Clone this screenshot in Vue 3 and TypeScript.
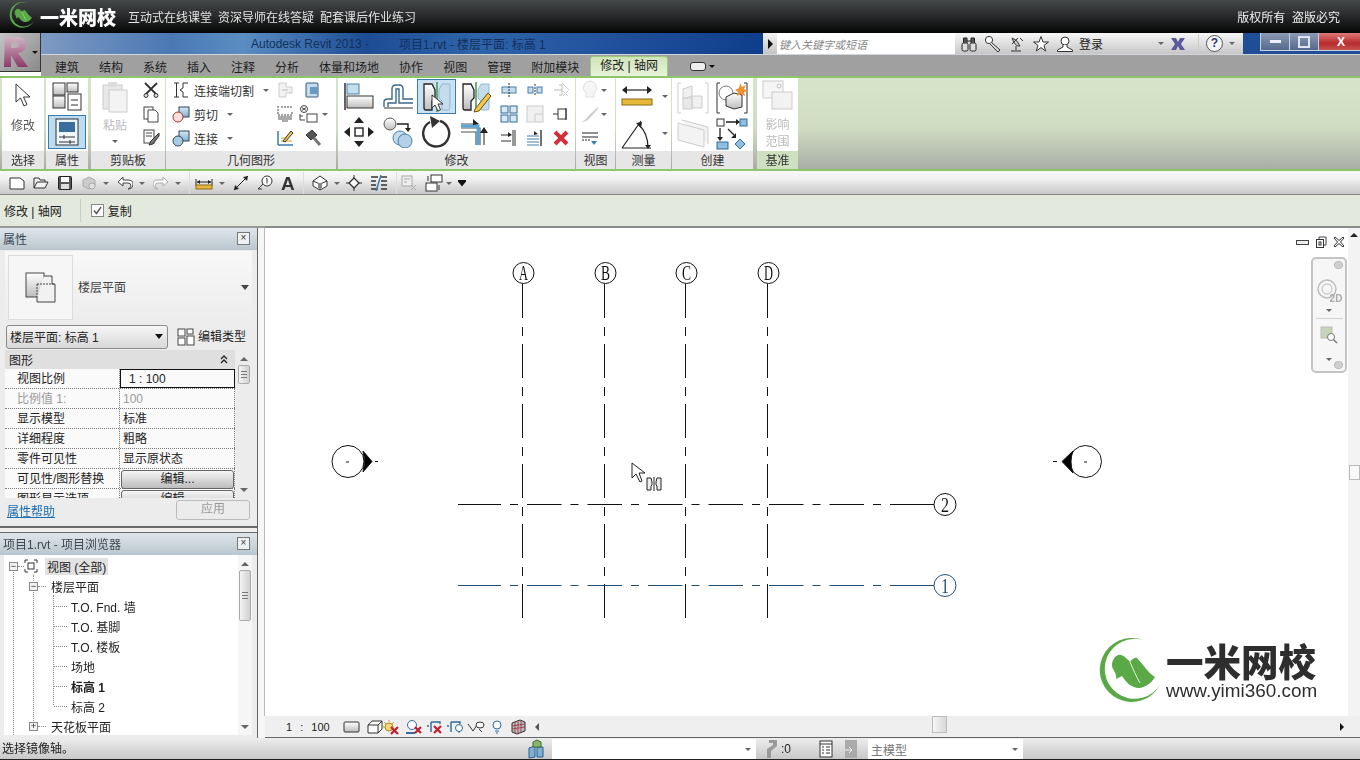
<template>
  <div class="app">
    <svg class="sprite" aria-hidden="true">
      <defs>
        <linearGradient id="gg" x1="0" y1="0" x2="0" y2="1"><stop offset="0" stop-color="#fff" /><stop offset="1" stop-color="#bdbdbd" /></linearGradient>
        <linearGradient id="bg" x1="0" y1="0" x2="0" y2="1"><stop offset="0" stop-color="#d8eaf6" /><stop offset="1" stop-color="#7fb0d0" /></linearGradient>
        <linearGradient id="rv" x1="0" y1="0" x2="0" y2="1"><stop offset="0" stop-color="#d2b4c4" /><stop offset="1" stop-color="#8c3a68" /></linearGradient>
        <symbol id="yimi" viewBox="0 0 72 72">
          <path d="M45 2A32 32 0 1 0 62 47A30 30 0 1 1 45 2Z" fill="#5aa846" />
          <path d="M14 26C15 20 19 16 23 17C27 18 30 22 32 24C34 21 37 19 39 20C45 26 50 35 57 39C52 47 44 52 36 49C30 47 27 42 24 38C22 39 20 40 18 41C19 38 17 34 15 31C14 29 14 28 14 26Z" fill="#5aa846" />
          <path d="M32 24C35 31 38 38 42 45" stroke="#e4f2dc" stroke-width="1" fill="none" />
        </symbol>
        <symbol id="mirror" viewBox="0 0 30 32">
          <path d="M2 3H10L13 9V17L10 20V29H4Q2 29 2 27Z" fill="url(#gg)" stroke="#222" stroke-width="1.3" />
          <path d="M15 1V31" stroke="#4f9a5c" stroke-width="1.6" />
          <path d="M28 3H20L17 9V17L20 20V29H26Q28 29 28 27Z" fill="#c5dcec" stroke="#8fb7d0" />
        </symbol>
      </defs>
    </svg>

    <!-- video site banner -->
    <header class="banner">
      <svg class="banner-logo" viewBox="0 0 72 72"><use href="#yimi" /></svg>
      <span class="banner-name">一米网校</span>
      <span class="banner-slogan">互动式在线课堂</span>
      <span class="banner-slogan">资深导师在线答疑</span>
      <span class="banner-slogan">配套课后作业练习</span>
      <span class="banner-right">版权所有&nbsp;&nbsp;盗版必究</span>
    </header>

    <div class="app-head">
      <div class="app-btn">
        <svg width="30" height="36" viewBox="0 0 30 36">
          <path d="M4 3H18Q26 4 25 12Q24 18 17 19L27 33H17L10 21V33H3Z" fill="url(#rv)" />
          <path d="M10 8H16Q19 9 18 12Q17 14 10 14Z" fill="#b9b0b4" />
        </svg>
        <i class="tri small black"></i>
      </div>
      <div class="app-main">
        <div class="title-row">
          <div class="title-blue">
            <span class="title-text">Autodesk Revit 2013 -</span>
            <span class="title-text">项目1.rvt - 楼层平面: 标高 1</span>
          </div>
          <div class="search-arrow"><i class="tri-right"></i></div>
          <div class="search-box">键入关键字或短语</div>
          <div class="title-tools">
            <svg width="18" height="18" viewBox="0 0 18 18"><rect x="2" y="8" width="6" height="8" rx="1.5" fill="#ddd" stroke="#222" /><rect x="10" y="8" width="6" height="8" rx="1.5" fill="#ddd" stroke="#222" /><path d="M3.5 8V3H7V8M11 8V3H14.5V8M7 6H11" fill="#555" stroke="#222" /></svg>
            <svg width="18" height="18" viewBox="0 0 18 18"><circle cx="5" cy="5" r="3.6" fill="#fff" stroke="#333" /><path d="M7.5 7.5L16 15L14 17L6 9" fill="#ddd" stroke="#333" /></svg>
            <svg width="18" height="18" viewBox="0 0 18 18"><path d="M4 3Q9 4 12 11Q7 12 4 3ZM10 3L4 9M8 11V15M3 16H13M12 3L15 6" fill="#ccc" stroke="#333" /></svg>
            <svg width="18" height="18" viewBox="0 0 18 18"><path d="M9 1.5L11 7H16.5L12 10.4L13.7 16L9 12.6L4.3 16L6 10.4L1.5 7H7Z" fill="#fff" stroke="#333" /></svg>
            <svg width="18" height="18" viewBox="0 0 18 18"><circle cx="9" cy="6" r="4" fill="#fff" stroke="#333" /><path d="M7 10V12L1.5 15V16.5H16.5V15L11 12V10" fill="#fff" stroke="#333" /></svg>
            <span class="login">登录</span>
            <i class="tri small login-tri"></i>
            <svg width="16" height="16" viewBox="0 0 16 16"><path d="M1 2H6L8 6L10 2H15L11 8L15 14H10L8 10L6 14H1L5 8Z" fill="#5a5a9a" /></svg>
            <span class="tools-sep"></span>
            <span class="help">?</span>
            <i class="tri small"></i>
          </div>
          <div class="win-ctrls">
            <span class="win-btn"><i class="win-min"></i></span>
            <span class="win-btn"><i class="win-max"></i></span>
            <span class="win-btn close">X</span>
          </div>
        </div>
        <nav class="tabs">
          <span>建筑</span><span>结构</span><span>系统</span><span>插入</span><span>注释</span><span>分析</span>
          <span>体量和场地</span><span>协作</span><span>视图</span><span>管理</span><span>附加模块</span>
          <span class="tab-active">修改 | 轴网</span>
          <span class="tab-min"><i></i></span>
          <i class="tri small black"></i>
        </nav>
      </div>
    </div>

    <!-- ribbon -->
    <section class="ribbon">
      <div class="panel w-select">
        <div class="pbody col-center">
          <svg class="mt-big" width="18" height="26" viewBox="0 0 18 26"><path d="M2 1V19L6.5 15L10 23L13 21.5L9.5 14H16Z" fill="#fff" stroke="#333" /></svg>
          <span class="big-label">修改</span>
        </div>
        <div class="plabel">选择</div>
      </div>
      <div class="panel w-select">
        <div class="pbody col-center">
          <svg class="mt-top" width="32" height="32" viewBox="0 0 32 32"><rect x="2" y="3" width="12" height="12" fill="url(#gg)" stroke="#333" /><rect x="2" y="16" width="12" height="12" fill="url(#gg)" stroke="#333" /><rect x="16" y="3" width="11" height="9" fill="url(#gg)" stroke="#333" /><rect x="17" y="14" width="13" height="16" fill="#fff" stroke="#333" /><path d="M20 20H27M20 25H27" stroke="#333" /></svg>
          <div class="active-big">
            <svg width="24" height="28" viewBox="0 0 24 28"><rect x="1" y="1" width="22" height="26" fill="#eef5fb" stroke="#333" /><rect x="4" y="4" width="16" height="10" fill="#3a6d9e" /><path d="M4 19H20M4 24H20M9 17V21M15 22V26" stroke="#333" /></svg>
          </div>
        </div>
        <div class="plabel">属性</div>
      </div>
      <div class="panel w-clip gap-l">
        <div class="pbody row">
          <div class="bigcol">
            <svg class="mt-paste" width="26" height="32" viewBox="0 0 26 32"><rect x="1" y="4" width="19" height="24" fill="#e8e8e8" stroke="#ccc" /><rect x="7" y="9" width="18" height="22" fill="#f3f3f3" stroke="#ccc" /><rect x="6" y="1" width="9" height="5" fill="#ddd" /></svg>
            <span class="big-label gray paste-label">粘贴</span>
            <i class="tri small mt-tri"></i>
          </div>
          <div class="smallcol">
            <span class="cell"><svg width="18" height="18" viewBox="0 0 18 18"><path d="M3 2L15 14M15 2L3 14" stroke="#333" stroke-width="1.8" /><circle cx="4" cy="14.5" r="2" fill="#ddd" stroke="#333" /><circle cx="14" cy="14.5" r="2" fill="#ddd" stroke="#333" /></svg></span>
            <span class="cell"><svg width="18" height="18" viewBox="0 0 18 18"><rect x="2" y="2" width="9" height="12" fill="#fff" stroke="#444" /><path d="M6 5H13L16 8V17H6Z" fill="#fff" stroke="#444" /></svg></span>
            <span class="cell"><svg width="18" height="18" viewBox="0 0 18 18"><rect x="2" y="1" width="10" height="13" fill="#fff" stroke="#444" /><path d="M4 4H10M4 7H10" stroke="#444" /><path d="M17 4L9 12L7 16L11 15L17 7Z" fill="#777" stroke="#333" /></svg></span>
          </div>
        </div>
        <div class="plabel">剪贴板</div>
      </div>
      <div class="panel w-geo">
        <div class="pbody row">
          <div class="geo-text">
            <span class="g-row"><svg width="18" height="18" viewBox="0 0 18 18"><path d="M2 2H7M2 16H7M4.5 2V16M16 2H11V7L8 9L11 11V16H16" fill="#fff" stroke="#333" /></svg>连接端切割<i class="tri small ml"></i></span>
            <span class="g-row"><svg width="18" height="18" viewBox="0 0 18 18"><rect x="7" y="2" width="10" height="10" fill="url(#bg)" stroke="#345" /><circle cx="6" cy="12" r="5" fill="#fbdede" stroke="#a33" /></svg>剪切<i class="tri small ml"></i></span>
            <span class="g-row"><svg width="18" height="18" viewBox="0 0 18 18"><rect x="7" y="2" width="10" height="10" fill="url(#bg)" stroke="#345" /><circle cx="6" cy="12" r="5" fill="#a8cde2" stroke="#345" /></svg>连接<i class="tri small ml"></i></span>
          </div>
          <div class="smallcol geo-a">
            <span class="cell"><svg width="18" height="18" viewBox="0 0 18 18"><path d="M3 2H10V6H16V12H10V16H3Z" fill="#f2f2f2" stroke="#ccc" /><path d="M12 9H6" stroke="#bbb" /></svg></span>
            <span class="cell"><svg width="18" height="18" viewBox="0 0 18 18"><path d="M2 1V10H16V7M5 2H16" stroke="#444" fill="none" stroke-dasharray="2 1" /><path d="M2 12H16M2 14H16M6 16H12" stroke="#555" /></svg></span>
            <span class="cell"><svg width="18" height="18" viewBox="0 0 18 18"><path d="M2 16V2M2 16H17" stroke="#3a7cb0" stroke-width="1.5" /><path d="M5 12H16M5 9H12" stroke="#d8a028" /><path d="M7 12L15 2L17 4L9 13Z" fill="#f2c84a" stroke="#333" /></svg></span>
          </div>
          <div class="smallcol geo-b">
            <span class="cell"><svg width="18" height="18" viewBox="0 0 18 18"><rect x="2" y="2" width="12" height="14" rx="1" fill="#c3dcee" stroke="#36587a" /><rect x="6" y="6" width="8" height="7" fill="#6b9ac0" /></svg></span>
            <span class="cell c-wide"><svg width="22" height="18" viewBox="0 0 22 18"><circle cx="6" cy="4" r="3.5" fill="#fff" stroke="#444" /><path d="M4 2.5L8 5.5M8 2.5L4 5.5" stroke="#444" /><rect x="9" y="9" width="10" height="8" fill="#fff" stroke="#444" /><path d="M2 9V15H7M2 11H5" stroke="#444" fill="none" /></svg><i class="tri small"></i></span>
            <span class="cell"><svg width="18" height="18" viewBox="0 0 18 18"><path d="M10 9L16 16" stroke="#777" stroke-width="3" /><path d="M2 6L8 1L13 6L7 11Z" fill="#555" stroke="#333" /></svg></span>
          </div>
        </div>
        <div class="plabel">几何图形</div>
      </div>
      <div class="panel w-mod">
        <div class="pbody row">
          <div class="mod-grid">
            <span class="mcell"><svg width="30" height="30" viewBox="0 0 30 30"><path d="M1 1V28" stroke="#222" stroke-width="1.4" /><rect x="3" y="2" width="12" height="10" fill="#c4deee" stroke="#4a7ea8" /><rect x="3" y="14" width="26" height="12" fill="url(#gg)" stroke="#333" /></svg></span>
            <span class="mcell"><svg width="32" height="30" viewBox="0 0 32 30"><path d="M2 25V20Q2 17 6 17H10V7Q10 3 14 3H17Q21 3 21 7V17H31M6 25V21H14V7H17V21H31" fill="none" stroke="#3b6a88" stroke-width="1.4" /><path d="M2 26H31" stroke="#333" /></svg></span>
            <span class="mcell active"><svg width="30" height="32" viewBox="0 0 30 32"><use href="#mirror" /></svg><svg class="mini-arrow" width="13" height="18" viewBox="0 0 13 18"><path d="M1 1V14L4 11L7 17L9.5 16L7 10H12Z" fill="#fff" stroke="#333" /></svg></span>
            <span class="mcell"><svg width="30" height="32" viewBox="0 0 30 32"><use href="#mirror" /><path d="M14 28L27 12L30 15L18 30L13 31Z" fill="#f2c84a" stroke="#6b5010" /></svg></span>
            <span class="mcell"><svg width="32" height="32" viewBox="0 0 32 32"><path d="M16 1L21 7H11ZM16 31L21 25H11ZM1 16L7 11V21ZM31 16L25 11V21Z" fill="#222" /><rect x="12" y="12" width="8" height="8" fill="#fff" stroke="#222" stroke-width="1.4" /></svg></span>
            <span class="mcell"><svg width="32" height="32" viewBox="0 0 32 32"><circle cx="8" cy="8" r="6" fill="url(#gg)" stroke="#555" /><path d="M15 8H26V13" fill="none" stroke="#222" stroke-width="1.4" /><path d="M23 12H29L26 16Z" fill="#222" /><circle cx="18" cy="22" r="7" fill="#c3dcee" stroke="#4a7ea8" /><circle cx="23" cy="25" r="7" fill="#b2d0e6" stroke="#4a7ea8" /></svg></span>
            <span class="mcell"><svg width="32" height="32" viewBox="0 0 32 32"><path d="M19 5A13 13 0 1 1 9 6" fill="none" stroke="#333" stroke-width="2.4" /><path d="M9 0L19 5L11 12Z" fill="#333" /></svg></span>
            <span class="mcell"><svg width="32" height="30" viewBox="0 0 32 30"><path d="M1 7H18M1 11H20V28M1 15H16V28" fill="none" stroke="#555" stroke-width="1.2" /><path d="M1 9H18V28" fill="none" stroke="#5ba4d8" stroke-width="3" /><path d="M13 2L19 7L13 8ZM24 10L28 16H20Z" fill="#222" /><path d="M24 14V28" stroke="#222" /></svg></span>
          </div>
          <div class="mod-small">
            <span class="cell"><svg width="18" height="18" viewBox="0 0 18 18"><rect x="2" y="6" width="14" height="6" fill="#c3dcee" stroke="#4a7ea8" /><path d="M9 2V16" stroke="#333" stroke-dasharray="2 1" /></svg></span>
            <span class="cell"><svg width="18" height="18" viewBox="0 0 18 18"><rect x="2" y="6" width="5" height="6" fill="#c3dcee" stroke="#4a7ea8" /><rect x="11" y="6" width="5" height="6" fill="#c3dcee" stroke="#4a7ea8" /><path d="M9 3V15" stroke="#333" stroke-dasharray="2 1" /></svg></span>
            <span class="cell"><svg width="18" height="18" viewBox="0 0 18 18"><path d="M2 9H10M7 4H10V14H7" fill="none" stroke="#bbb" /><path d="M10 2L17 9M11 15L16 10M11 10L16 15" stroke="#ccc" /></svg></span>
            <span class="cell"><svg width="18" height="18" viewBox="0 0 18 18"><rect x="1" y="1" width="7" height="7" fill="#d8e8f4" stroke="#2e6a98" /><rect x="10" y="1" width="7" height="7" fill="#d8e8f4" stroke="#2e6a98" /><rect x="1" y="10" width="7" height="7" fill="#d8e8f4" stroke="#2e6a98" /><rect x="10" y="10" width="7" height="7" fill="#d8e8f4" stroke="#2e6a98" /></svg></span>
            <span class="cell"><svg width="18" height="18" viewBox="0 0 18 18"><rect x="1" y="1" width="16" height="16" fill="#f0f0f0" stroke="#ccc" /><path d="M9 17V9H17" stroke="#ccc" fill="none" /></svg></span>
            <span class="cell"><svg width="18" height="18" viewBox="0 0 18 18"><rect x="6" y="4" width="8" height="10" fill="#fff" stroke="#333" /><path d="M1 9H6M14 3V15" stroke="#333" /></svg></span>
            <span class="cell"><svg width="18" height="18" viewBox="0 0 18 18"><path d="M1 6H9M1 12H11M15 1V17M13 1V17" stroke="#333" /><path d="M8 3L12 6L8 8Z" fill="#222" /></svg></span>
            <span class="cell"><svg width="18" height="18" viewBox="0 0 18 18"><path d="M1 7H13M1 10H13M1 13H13M1 16H13" stroke="#4a7ea8" /><path d="M15 1V17" stroke="#333" stroke-width="1.4" /><path d="M8 2L12 5L8 6Z" fill="#222" /></svg></span>
            <span class="cell"><svg width="18" height="18" viewBox="0 0 18 18"><path d="M3 3L15 15M15 3L3 15" stroke="#d0303a" stroke-width="4" /></svg></span>
          </div>
        </div>
        <div class="plabel">修改</div>
      </div>
      <div class="panel w-view">
        <div class="pbody">
          <div class="smallcol view-col">
            <span class="cell c-wide"><svg width="18" height="20" viewBox="0 0 18 20"><path d="M5 13Q1 10 3 5Q5 1 9 1Q13 1 15 5Q17 10 13 13V17H5Z" fill="#f6f6f6" stroke="#ddd" /></svg><i class="tri small"></i></span>
            <span class="cell c-wide"><svg width="18" height="18" viewBox="0 0 18 18"><path d="M17 2L8 10L5 14L1 17Q5 17 9 13L17 4Z" fill="#d0d0d0" /></svg><i class="tri small"></i></span>
            <span class="cell c-wide"><svg width="18" height="18" viewBox="0 0 18 18"><path d="M1 4H17M1 8H17" stroke="#222" /><path d="M1 11H9" stroke="#222" stroke-dasharray="2 1" /><path d="M10 12H16L13 16Z" fill="#3a7cb0" /></svg></span>
          </div>
        </div>
        <div class="plabel">视图</div>
      </div>
      <div class="panel w-measure">
        <div class="pbody">
          <div class="meas-row"><svg width="32" height="24" viewBox="0 0 32 24"><path d="M2 5H30" stroke="#222" stroke-width="1.2" /><path d="M1 5L6 1V9ZM31 5L26 1V9Z" fill="#222" /><rect x="1" y="14" width="30" height="6" fill="#e8b83a" stroke="#8a6a18" /></svg><i class="tri small"></i></div>
          <div class="meas-row"><svg width="32" height="32" viewBox="0 0 32 32"><path d="M1 30H30M1 30L20 3" fill="none" stroke="#222" stroke-width="1.2" /><path d="M18 7Q27 15 27 30" fill="none" stroke="#222" stroke-width="1.2" /><path d="M15 5L21 4L20 10ZM24 27H30L27 31Z" fill="#222" /></svg><i class="tri small"></i></div>
        </div>
        <div class="plabel">测量</div>
      </div>
      <div class="panel w-create">
        <div class="pbody create-grid">
          <span class="mcell"><svg width="32" height="32" viewBox="0 0 32 32"><path d="M4 1H1V31H4M28 1H31V31H28" fill="none" stroke="#ccc" /><path d="M6 7L15 4V14L6 17ZM15 14L25 14V26H15Z" fill="#f0f0f0" stroke="#ccc" /><rect x="6" y="16" width="9" height="11" fill="#e8e8e8" stroke="#ccc" /></svg></span>
          <span class="mcell"><svg width="32" height="32" viewBox="0 0 32 32"><path d="M4 1H1V31H4M28 1H31V31H28" fill="none" stroke="#333" /><circle cx="10" cy="11" r="7" fill="#fff" stroke="#777" /><path d="M10 15L18 11L26 13V25L18 27L10 24Z" fill="url(#gg)" stroke="#333" /><path d="M24 1L26 5L30 3L28 7L32 9L28 10L29 14L25 12L21 14L22 10L19 8L23 6Z" fill="#f09030" /></svg></span>
          <span class="mcell"><svg width="34" height="32" viewBox="0 0 34 32"><path d="M2 5L28 12V29L2 22ZM6 2L32 9V26" fill="#f3f3f3" stroke="#ccc" /></svg></span>
          <span class="mcell"><svg width="32" height="32" viewBox="0 0 32 32"><rect x="1" y="1" width="7" height="7" fill="#fff" stroke="#333" /><rect x="24" y="1" width="7" height="7" fill="#8fbfe0" stroke="#2e6a98" /><rect x="1" y="24" width="11" height="7" fill="#8fbfe0" stroke="#2e6a98" /><path d="M24 21L29 26L24 31L19 26Z" fill="#8fbfe0" stroke="#2e6a98" /><path d="M10 4H21M4 10V21M12 11L18 17" stroke="#222" stroke-width="1.3" /><path d="M20 1L24 4L20 7ZM1 19H7L4 23ZM20 15L20 20H15Z" fill="#222" /></svg></span>
        </div>
        <div class="plabel">创建</div>
      </div>
      <div class="panel w-datum">
        <div class="pbody col-center">
          <svg class="mt-top" width="32" height="32" viewBox="0 0 32 32"><rect x="1" y="1" width="20" height="17" fill="#f6f6f6" stroke="#ccc" /><rect x="10" y="12" width="20" height="17" fill="#f2f2f2" stroke="#ccc" /><circle cx="17" cy="6" r="2" fill="#fff" stroke="#bbb" /></svg>
          <span class="big-label gray tight">影响</span>
          <span class="big-label gray tight2">范围</span>
        </div>
        <div class="plabel datum-label">基准</div>
      </div>
    </section>

    <!-- quick access -->
    <div class="qat">
      <svg width="16" height="16" viewBox="0 0 16 16"><path d="M1 3H11L15 6V14H1Z" fill="#fff" stroke="#333" /></svg>
      <svg width="16" height="16" viewBox="0 0 16 16"><path d="M1 13V3H6L7 5H12V7M1 13L4 7H15L12 13Z" fill="#f4f4f4" stroke="#333" /></svg>
      <svg width="16" height="16" viewBox="0 0 16 16"><rect x="1.5" y="1.5" width="13" height="13" rx="1" fill="#555" stroke="#222" /><rect x="4" y="2" width="8" height="5" fill="#fff" /><rect x="4" y="9" width="8" height="5" fill="#ddd" /></svg>
      <svg width="16" height="16" viewBox="0 0 16 16"><path d="M2 5L8 2L14 5V11L8 14L2 11Z" fill="#ccc" stroke="#aaa" /><circle cx="11" cy="11" r="3" fill="#e0e0e0" stroke="#aaa" /></svg>
      <i class="tri small"></i>
      <svg width="16" height="16" viewBox="0 0 16 16"><path d="M6 2L1 7L6 11V8H11Q14 8 14 11Q14 13 11 14Q16 14 16 9Q16 5 11 5H6Z" fill="#fff" stroke="#444" /></svg>
      <i class="tri small"></i>
      <svg width="16" height="16" viewBox="0 0 16 16"><path d="M10 2L15 7L10 11V8H5Q2 8 2 11Q2 13 5 14Q0 14 0 9Q0 5 5 5H10Z" fill="#fff" stroke="#aaa" /></svg>
      <i class="tri small"></i>
      <span class="q-sep"></span>
      <svg class="q-dim" width="18" height="16" viewBox="0 0 18 16"><path d="M1 4V11M17 4V11M2 7H16" stroke="#222" /><path d="M2 7L5 5V9ZM16 7L13 5V9Z" fill="#222" /><rect x="1" y="10" width="16" height="4" fill="#e8b83a" stroke="#8a6a18" /></svg>
      <i class="tri small"></i>
      <svg width="16" height="16" viewBox="0 0 16 16"><path d="M1 15L15 1" stroke="#222" /><path d="M15 1L10 2L14 6ZM1 15L2 10L6 14Z" fill="#222" /></svg>
      <svg width="16" height="16" viewBox="0 0 16 16"><circle cx="10" cy="6" r="5" fill="#fff" stroke="#333" /><path d="M6 9L1 14H5" fill="none" stroke="#333" /><path d="M9 4L10 3.5V8.5" stroke="#333" fill="none" /></svg>
      <span class="q-a">A</span>
      <span class="q-sep"></span>
      <svg width="16" height="16" viewBox="0 0 16 16"><path d="M1 6L8 1L15 6V11L8 15L1 11Z" fill="#fff" stroke="#333" /><path d="M1 6L8 9L15 6M8 9V15" stroke="#333" fill="none" /><rect x="6" y="8" width="4" height="5" fill="#888" /></svg>
      <i class="tri small"></i>
      <svg class="q-pull2" width="16" height="16" viewBox="0 0 16 16"><path d="M8 3L13 8L8 13L3 8Z" fill="#fff" stroke="#333" stroke-width="1.3" /><path d="M8 0V3M8 13V16M0 8H3M13 8H16" stroke="#333" /></svg>
      <svg width="18" height="16" viewBox="0 0 18 16"><path d="M1 2H8M1 6H6M1 10H6M1 14H8M11 2H17M11 6H17M11 10H17M11 14H17" stroke="#333" stroke-width="1.4" /><path d="M6 16L11 0" stroke="#3a7cb0" stroke-width="1.4" /></svg>
      <span class="q-sep"></span>
      <svg class="q-pull4" width="16" height="16" viewBox="0 0 16 16"><rect x="1" y="1" width="10" height="10" fill="#eee" stroke="#aaa" /><path d="M3 4H9M3 7H6M10 10L15 15M15 10L10 15" stroke="#aaa" /></svg>
      <svg width="18" height="18" viewBox="0 0 18 18"><rect x="6" y="1" width="11" height="7" fill="#fff" stroke="#333" /><rect x="1" y="9" width="11" height="8" fill="#fff" stroke="#333" /><path d="M3 2V7M14 11V16" stroke="#333" /></svg>
      <i class="tri small q-tri-end"></i>
      <i class="q-more"></i>
    </div>

    <!-- options -->
    <div class="options">
      <span>修改 | 轴网</span>
      <span class="opt-sep"></span>
      <span class="check">
        <svg width="11" height="11" viewBox="0 0 11 11"><path d="M2 5.5L4.5 8.5L9 2" fill="none" stroke="#555" stroke-width="1.4" /></svg>
      </span>
      <span>复制</span>
    </div>

    <main class="workspace">
      <aside class="left">
        <section class="props">
          <div class="dock-title"><span>属性</span><span class="dock-x">×</span></div>
          <div class="type-head">
            <div class="type-thumb">
              <svg width="32" height="32" viewBox="0 0 32 32"><rect x="1" y="1" width="18" height="24" fill="url(#gg)" stroke="#444" /><path d="M19 4H27V12H30V30H12V25" fill="#f1f1f1" stroke="#444" /><path d="M12 12H30M12 12V25" stroke="#444" stroke-dasharray="2 1" fill="none" /></svg>
            </div>
            <span class="type-name">楼层平面</span>
            <i class="tri"></i>
          </div>
          <div class="type-row">
            <div class="combo"><span>楼层平面: 标高 1</span><i class="tri black"></i></div>
            <svg width="18" height="18" viewBox="0 0 18 18"><rect x="1" y="1" width="7" height="7" fill="#fff" stroke="#444" /><rect x="1" y="10" width="7" height="7" fill="#fff" stroke="#444" /><rect x="10" y="1" width="6" height="5" fill="#fff" stroke="#444" /><rect x="10" y="8" width="7" height="9" fill="#fff" stroke="#444" /></svg>
            <span class="edit-type">编辑类型</span>
          </div>
          <div class="prop-body">
            <div class="prop-table">
              <div class="group">
                <span>图形</span>
                <svg width="8" height="9" viewBox="0 0 8 9"><path d="M1 4L4 1L7 4M1 8L4 5L7 8" fill="none" stroke="#222" stroke-width="1.3" /></svg>
              </div>
              <div v-for="r in propRows" :key="r.name" class="prop-row" :class="{ dim: r.dim }">
                <span class="pname">{{ r.name }}</span>
                <span v-if="r.focus" class="pval focus">{{ r.value }}</span>
                <span v-else-if="r.button" class="pval"><span class="edit-btn">{{ r.value }}</span></span>
                <span v-else class="pval">{{ r.value }}</span>
              </div>
            </div>
            <div class="vscroll prop-scroll">
              <i class="arrow-up"></i>
              <span class="thumb short"><b></b></span>
              <i class="arrow-down end"></i>
            </div>
          </div>
          <div class="prop-foot">
            <a class="help-link">属性帮助</a>
            <span class="apply">应用</span>
          </div>
        </section>

        <section class="browser">
          <div class="dock-title"><span>项目1.rvt - 项目浏览器</span><span class="dock-x">×</span></div>
          <div class="tree-wrap">
            <div class="tree">
              <i class="vline v1"></i><i class="vline v2"></i><i class="vline v3"></i>
              <div v-for="n in treeRows" :key="n.label" class="node" :class="[`lv${n.level}`, { bold: n.bold }]">
                <span v-if="n.box" class="box">{{ n.box }}</span>
                <i class="hdots"></i>
                <svg v-if="n.level === 0" class="view-ic" width="14" height="14" viewBox="0 0 14 14"><path d="M1 4V1H4M10 1H13V4M13 10V13H10M4 13H1V10" fill="none" stroke="#333" /><rect x="4" y="4" width="6" height="6" fill="none" stroke="#333" /></svg>
                <span class="node-text">{{ n.label }}</span>
              </div>
            </div>
            <div class="vscroll tree-scroll">
              <i class="arrow-up"></i>
              <span class="thumb long"><b></b></span>
              <i class="arrow-down end"></i>
            </div>
          </div>
        </section>
      </aside>

      <div class="view-area">
        <div class="canvas">
          <svg class="drawing" width="1083" height="489" viewBox="265 228 1083 489">
            <g v-for="g in vGrids" :key="g.label">
              <line :x1="g.x" y1="284" :x2="g.x" y2="620" stroke="#111" stroke-dasharray="34 9 9 8" />
              <circle :cx="g.x + 1" cy="273" r="10.5" fill="#fff" stroke="#111" />
              <text :x="g.x + 1" y="280" class="grid-label" textLength="9" lengthAdjust="spacingAndGlyphs">{{ g.label }}</text>
            </g>
            <g v-for="g in hGrids" :key="g.label" :stroke="g.color">
              <line x1="458" :y1="g.y" x2="470" :y2="g.y" />
              <line x1="934" :y1="g.y" x2="466" :y2="g.y" stroke-dasharray="44 9 8 9 34.5 9 8 9 34.5 9 8 9 34.5 9 8 9 34.5 9 8 9 34.5 9 8 9 34.5 9 8 9 34.5" />
              <circle cx="945" :cy="g.y" r="11" fill="#fff" />
              <text x="945" :y="g.y + 7" class="grid-label" :style="{ fill: g.color }" stroke="none" textLength="8" lengthAdjust="spacingAndGlyphs">{{ g.label }}</text>
            </g>
            <g stroke="#111">
              <circle cx="348" cy="461.5" r="16" fill="#fff" />
              <path d="M363 451L372 461.5L363 472Q366 461 363 451Z" fill="#000" />
              <path d="M346 462H349M375 461.5H378" />
              <circle cx="1085.5" cy="461.5" r="16" fill="#fff" />
              <path d="M1073 451L1062 461.5L1073 473Q1069 461 1073 451Z" fill="#000" />
              <path d="M1084 462H1087M1053 461.5H1057" />
            </g>
            <path d="M632 463V478L636 474L640 482L642 481L639 473H645Z" fill="#fff" stroke="#222" />
            <g transform="translate(646 477)">
              <path d="M1 1H5L6 5V8L5 9V13H1Z" fill="#eee" stroke="#222" />
              <path d="M8 0V14" stroke="#222" />
              <path d="M15 1H11L10 5V8L11 9V13H15Z" fill="#eee" stroke="#222" />
            </g>
          </svg>

          <div class="view-ctrls">
            <i class="vc-min"></i>
            <svg width="12" height="12" viewBox="0 0 12 12"><path d="M4 3V1H11V9H9" fill="none" stroke="#444" /><rect x="1.5" y="3.5" width="7" height="8" fill="#fff" stroke="#333" /><rect x="4" y="6" width="2" height="3" fill="none" stroke="#333" /></svg>
            <svg width="12" height="12" viewBox="0 0 12 12"><path d="M1 2L2 1L6 4.5L10 1L11 2L7.5 6L11 10L10 11L6 7.5L2 11L1 10L4.5 6Z" fill="#fff" stroke="#333" /></svg>
          </div>

          <div class="nav-bar">
            <span class="nav-dot"></span>
            <svg class="nav-wheel" width="26" height="28" viewBox="0 0 26 28"><circle cx="11" cy="12" r="9" fill="none" stroke="#bbb" stroke-width="1.4" /><circle cx="11" cy="12" r="5" fill="none" stroke="#bbb" /></svg>
            <span class="nav-2d">2D</span>
            <i class="tri small"></i>
            <span class="nav-sep"></span>
            <svg class="nav-zoom" width="18" height="18" viewBox="0 0 18 18"><rect x="1" y="1" width="11" height="11" fill="#c5d5b5" stroke="#bbb" /><circle cx="11" cy="11" r="3.5" fill="#fff" stroke="#777" /><path d="M13.5 13.5L17 17" stroke="#777" stroke-width="1.4" /></svg>
            <i class="tri small nav-tri"></i>
            <span class="nav-dot bottom"></span>
          </div>

          <div class="watermark">
            <svg class="wm-logo" width="72" height="72" viewBox="0 0 72 72"><use href="#yimi" /></svg>
            <div class="wm-text">
              <div class="wm-name">一米网校</div>
              <div class="wm-url">www.yimi360.com</div>
            </div>
          </div>

          <div class="vscroll canvas-scroll">
            <i class="arrow-up"></i>
            <span class="cs-thumb"></span>
          </div>
        </div>

        <div class="view-bar">
          <span class="scale">1 : 100</span>
          <div class="vb-icons">
            <svg width="17" height="14" viewBox="0 0 17 14"><rect x="1" y="2" width="15" height="10" rx="1" fill="url(#gg)" stroke="#333" /></svg>
            <svg width="16" height="14" viewBox="0 0 16 14"><path d="M1 5H11V13H1ZM1 5L5 1H15L11 5M15 1V9L11 13" fill="#fff" stroke="#333" /></svg>
            <svg width="18" height="16" viewBox="0 0 18 16"><circle cx="7" cy="8" r="4" fill="#f6d878" stroke="#b08a20" /><path d="M7 1V3M1 8H3M2 3L4 5M12 3L10 5" stroke="#d0a030" /><path d="M9 8L16 15M16 8L9 15" stroke="#c02030" stroke-width="2.2" /></svg>
            <svg width="18" height="16" viewBox="0 0 18 16"><circle cx="7" cy="6" r="4.5" fill="#fff" stroke="#3a6d9e" /><path d="M1 14H10" stroke="#3a6d9e" stroke-width="2" /><path d="M10 8L16 14M16 8L10 14" stroke="#c02030" stroke-width="2.2" /></svg>
            <svg width="18" height="16" viewBox="0 0 18 16"><path d="M1 7H3M5 3H14V5M5 3V13" stroke="#2e6a98" stroke-width="1.4" fill="none" /><path d="M8 7L15 14M15 7L8 14" stroke="#c02030" stroke-width="2.2" /></svg>
            <svg width="18" height="16" viewBox="0 0 18 16"><path d="M1 7H3M5 3H14V5M5 3V13" stroke="#2e6a98" stroke-width="1.4" fill="none" /><circle cx="13" cy="9" r="3.5" fill="#fff" stroke="#2e6a98" /><path d="M12 13H14" stroke="#2e6a98" /></svg>
            <svg width="18" height="16" viewBox="0 0 18 16"><path d="M1 5L6 12L10 6" fill="none" stroke="#333" /><ellipse cx="13" cy="6" rx="4" ry="3" fill="#fff" stroke="#333" /><path d="M12 10L15 13" stroke="#333" /></svg>
            <svg width="12" height="16" viewBox="0 0 12 16"><circle cx="6" cy="6" r="4" fill="#fff" stroke="#2e6a98" /><path d="M4 12H8M5 14H7" stroke="#2e6a98" /></svg>
            <svg width="15" height="16" viewBox="0 0 15 16"><path d="M1 4L9 1L14 3V12L6 15L1 13Z" fill="#bbb" stroke="#333" /><path d="M4 3V14M7 2V15M10 2V13M1 7L14 5M1 10L14 8" stroke="#a03040" stroke-width=".8" /></svg>
            <i class="tri-left"></i>
          </div>
          <span class="h-thumb"></span>
          <i class="tri-right"></i>
        </div>
      </div>
    </main>

    <footer class="status">
      <span class="status-text">选择镜像轴。</span>
      <svg class="st-ic" width="18" height="20" viewBox="0 0 18 20"><path d="M2 9L8 7V18L2 19ZM10 8H16V18H10Z" fill="#7fb0d8" stroke="#2e5f88" /><path d="M6 3L10 1L14 3V8H6Z" fill="#86b86a" stroke="#3f6a30" /></svg>
      <div class="st-input wide"><i class="tri small"></i></div>
      <svg class="st-ic2" width="14" height="20" viewBox="0 0 14 20"><path d="M4 1H12V7L6 12V19H2V10L8 6V4H4Z" fill="#9a9a9a" /></svg>
      <span class="st-count">:0</span>
      <svg class="st-ic3" width="14" height="18" viewBox="0 0 14 18"><rect x="1" y="1" width="12" height="16" fill="#fff" stroke="#333" /><path d="M1 4H13M3 7H5M7 7H11M3 10H5M7 10H11M3 13H5M7 13H11" stroke="#333" /></svg>
      <svg class="st-ic4" width="14" height="20" viewBox="0 0 14 20"><rect x="1" y="1" width="12" height="18" fill="#aaa" /><path d="M1 11H8M5 8L8 11L5 14" stroke="#eee" fill="none" /></svg>
      <div class="st-input model"><span>主模型</span><i class="tri small"></i></div>
    </footer>
  </div>
</template>

<script setup lang="ts">
interface PropRow {
  name: string
  value: string
  dim?: boolean
  focus?: boolean
  button?: boolean
}

interface TreeRow {
  label: string
  level: number
  box?: string
  bold?: boolean
}

const propRows: PropRow[] = [
  { name: '视图比例', value: '1 : 100', focus: true },
  { name: '比例值 1:', value: '100', dim: true },
  { name: '显示模型', value: '标准' },
  { name: '详细程度', value: '粗略' },
  { name: '零件可见性', value: '显示原状态' },
  { name: '可见性/图形替换', value: '编辑...', button: true },
  { name: '图形显示选项', value: '编辑...', button: true }
]

const treeRows: TreeRow[] = [
  { label: '视图 (全部)', level: 0, box: '−' },
  { label: '楼层平面', level: 1, box: '−' },
  { label: 'T.O. Fnd. 墙', level: 2 },
  { label: 'T.O. 基脚', level: 2 },
  { label: 'T.O. 楼板', level: 2 },
  { label: '场地', level: 2 },
  { label: '标高 1', level: 2, bold: true },
  { label: '标高 2', level: 2 },
  { label: '天花板平面', level: 1, box: '+' }
]

const vGrids = [
  { label: 'A', x: 522.5 },
  { label: 'B', x: 604.5 },
  { label: 'C', x: 685.5 },
  { label: 'D', x: 767.5 }
]

const hGrids = [
  { label: '2', y: 504.5, color: '#111' },
  { label: '1', y: 585.5, color: '#1f4f78' }
]
</script>

<style>
html,
body {
  margin: 0;
  background: #fff;
}
</style>

<style scoped>
.app {
  position: relative;
  width: 1360px;
  height: 760px;
  display: flex;
  flex-direction: column;
  overflow: hidden;
  font-family: "Liberation Sans", "Noto Sans CJK SC", sans-serif;
  font-size: 12px;
  color: #222;
  filter: blur(0.3px);
}
.sprite {
  position: absolute;
  width: 0;
  height: 0;
}
svg {
  display: block;
  flex: none;
}
i {
  display: block;
  flex: none;
}

.tri {
  width: 0;
  height: 0;
  border-style: solid;
  border-width: 5px 4px 0;
  border-color: #444 transparent transparent;
}
.tri.small {
  border-width: 3px 3px 0;
  border-top-color: #666;
}
.tri.black,
.tri.small.black {
  border-top-color: #111;
}
.tri-right {
  width: 0;
  height: 0;
  border-style: solid;
  border-width: 5px 0 5px 5px;
  border-color: transparent transparent transparent #111;
}
.tri-left {
  width: 0;
  height: 0;
  border-style: solid;
  border-width: 4px 4px 4px 0;
  border-color: transparent #555 transparent transparent;
}

/* banner */
.banner {
  height: 33px;
  flex: none;
  display: flex;
  align-items: center;
  background: linear-gradient(#46494a, #2a2c2d 45%, #050505);
  color: #e4e4e4;
}
.banner-logo {
  width: 29px;
  height: 29px;
  margin-left: 9px;
}
.banner-name {
  margin-left: 2px;
  font-size: 19px;
  font-weight: 900;
  color: #fff;
}
.banner-slogan {
  margin-left: 6px;
}
.banner-name + .banner-slogan {
  margin-left: 12px;
}
.banner-right {
  margin-left: auto;
  margin-right: 20px;
  color: #f0f0f0;
}

/* app head */
.app-head {
  flex: none;
  height: 43px;
  display: flex;
  position: relative;
}
.app-btn {
  width: 41px;
  height: 39px;
  flex: none;
  box-sizing: border-box;
  display: flex;
  align-items: center;
  gap: 1px;
  padding-left: 1px;
  background: linear-gradient(135deg, #c4c4c4, #8a8a8a);
  border-right: 1px solid #333;
  border-bottom: 1px solid #333;
}
.app-main {
  flex: 1;
  min-width: 0;
  display: flex;
  flex-direction: column;
}
.title-row {
  height: 21px;
  flex: none;
  display: flex;
  border-bottom: 1px solid #d0d6dc;
  background: #1f4d96;
}
.title-blue {
  width: 722px;
  flex: none;
  display: flex;
  align-items: center;
  gap: 30px;
  padding-left: 210px;
  box-sizing: border-box;
  background: linear-gradient(90deg, #7d9ac2 0, #4b78b4 18%, #5a8dc2 28%, #1d4c94 45%, #2e64aa 60%, #1f4e99 82%, #0e3e8a 100%);
}
.title-text {
  color: #12305c;
}
.search-arrow {
  width: 14px;
  flex: none;
  display: flex;
  align-items: center;
  justify-content: center;
  background: linear-gradient(#f2f2f2, #c4c4c4);
}
.search-box {
  width: 178px;
  flex: none;
  box-sizing: border-box;
  padding: 3px 0 0 2px;
  background: #fff;
  color: #888;
  font-size: 11px;
  font-style: italic;
}
.title-tools {
  width: 288px;
  flex: none;
  display: flex;
  align-items: center;
  gap: 6px;
  padding-left: 5px;
  box-sizing: border-box;
  background: linear-gradient(#f7f7f7, #c6c6c6);
}
.login {
  margin-left: -1px;
  white-space: nowrap;
}
.login-tri {
  margin-left: 49px;
}
.tools-sep {
  width: 1px;
  height: 20px;
  margin: 0 0 0 6px;
  background: #ccc;
}
.help {
  width: 15px;
  height: 15px;
  margin-left: 1px;
  border: 1px solid #555;
  border-radius: 50%;
  background: #f4f4f8;
  color: #32327a;
  font-size: 12px;
  font-weight: 700;
  line-height: 15px;
  text-align: center;
}
.win-ctrls {
  flex: 1;
  display: flex;
  align-items: stretch;
  padding-left: 17px;
  padding-bottom: 3px;
  background: #1f4d96;
}
.win-btn {
  width: 28px;
  display: flex;
  align-items: center;
  justify-content: center;
  border: 1px solid #c8d2e0;
  border-top: 0;
  border-left-width: 1px;
  background: linear-gradient(#8c9bb5, #55698c);
}
.win-btn + .win-btn {
  border-left: 0;
}
.win-btn.close {
  width: 44px;
  background: linear-gradient(#dc7a78, #b82c2c 60%, #c85450);
  color: #fff;
  font-weight: 700;
  border-right: 0;
}
.win-min {
  width: 11px;
  height: 3px;
  background: #eef;
}
.win-max {
  width: 8px;
  height: 8px;
  border: 2px solid #dfe4ee;
}
.tabs {
  flex: 1;
  display: flex;
  align-items: center;
  gap: 20px;
  padding-left: 14px;
  padding-top: 1px;
  background: #a0a0a0;
  color: #1e1e1e;
}
.tab-active {
  align-self: flex-end;
  height: 19px;
  line-height: 18px;
  margin-left: -9px;
  padding: 0 9px;
  border: 1px solid #9ccc78;
  border-bottom: 0;
  border-radius: 3px 3px 0 0;
  background: linear-gradient(#cfe3ba, #e8f3da);
}
.tab-min {
  width: 14px;
  height: 7px;
  margin-left: 2px;
  border: 1px solid #333;
  border-radius: 3px;
  background: #eee;
}
.tabs > .tri {
  margin-left: -17px;
}

/* ribbon */
.ribbon {
  flex: none;
  height: 95px;
  display: flex;
  padding-left: 2px;
  gap: 1px;
  box-sizing: border-box;
  border-top: 2px solid #8fc56a;
  border-bottom: 2px solid #8fc56a;
  background: linear-gradient(#d6e5c9, #cfdcc2 55%, #a9aea5);
}
.panel {
  display: flex;
  flex-direction: column;
}
.w-select {
  width: 42px;
  margin-right: 1px;
}
.w-clip {
  width: 74px;
  margin-left: 1px;
}
.w-geo {
  width: 170px;
}
.w-mod {
  width: 237px;
  margin-left: 1px;
}
.w-view {
  width: 39px;
}
.w-measure {
  width: 55px;
}
.w-create {
  width: 81px;
}
.w-datum {
  width: 41px;
  margin-left: 3px;
}
.pbody {
  flex: 1;
  min-height: 0;
  background: #fff;
}
.plabel {
  height: 18px;
  flex: none;
  background: #e6e6e6;
  text-align: center;
  line-height: 20px;
  color: #333;
}
.datum-label {
  background: #cfe0c0;
}
.col-center {
  display: flex;
  flex-direction: column;
  align-items: center;
}
.row {
  display: flex;
}
.big-label {
  color: #555;
  margin-top: 7px;
}
.big-label.gray {
  color: #bbb;
}
.big-label.paste-label {
  margin-top: 3px;
}
.big-label.tight {
  margin-top: 5px;
  line-height: 17px;
}
.big-label.tight2 {
  margin-top: 0;
  line-height: 17px;
}
.mt-big {
  margin-top: 5px;
}
.mt-paste {
  margin-top: 3px;
}
.mt-top {
  margin-top: 2px;
}
.mt-tri {
  margin-top: 7px;
}
.active-big {
  width: 38px;
  height: 34px;
  flex: none;
  margin-top: 3px;
  box-sizing: border-box;
  display: flex;
  align-items: center;
  justify-content: center;
  border: 1px solid #3a7cb0;
  background: #bcdcf2;
}
.bigcol {
  width: 48px;
  display: flex;
  flex-direction: column;
  align-items: center;
}
.smallcol {
  display: grid;
  grid-auto-rows: 24px;
  width: 24px;
}
.cell {
  display: flex;
  align-items: center;
  justify-content: center;
  gap: 2px;
}
.c-wide {
  justify-content: flex-start;
}
.geo-text {
  width: 107px;
  box-sizing: border-box;
  padding-left: 6px;
  display: grid;
  grid-auto-rows: 24px;
}
.g-row {
  display: flex;
  align-items: center;
  gap: 4px;
  color: #333;
}
.ml {
  margin-left: 5px;
}
.geo-b {
  margin-left: 1px;
}
.mod-grid {
  width: 158px;
  box-sizing: border-box;
  display: grid;
  grid-template-columns: repeat(4, 39px);
  grid-auto-rows: 35px;
  padding: 1px 0 0 1px;
}
.mcell {
  position: relative;
  display: flex;
  align-items: center;
  justify-content: center;
}
.mcell.active {
  border: 1px solid #3a7cb0;
  background: #c8e1f3;
  box-sizing: border-box;
}
.mini-arrow {
  position: absolute;
  left: 13px;
  top: 14px;
}
.mod-small {
  display: grid;
  grid-template-columns: repeat(3, 26px);
  grid-auto-rows: 24px;
}
.view-col {
  padding-left: 5px;
  width: 34px;
}
.meas-row {
  display: flex;
  align-items: center;
  gap: 9px;
  padding-left: 5px;
  height: 37px;
}
.create-grid {
  display: grid;
  grid-template-columns: 42px 36px;
  grid-auto-rows: 36px;
  padding-top: 2px;
}

/* quick access */
.qat {
  flex: none;
  height: 24px;
  display: flex;
  align-items: center;
  gap: 8px;
  padding: 1px 0 0 9px;
  box-sizing: border-box;
  background: linear-gradient(#f8f8f8, #f2f2f2 30%, #c8c8c8);
  border-bottom: 1px solid #888;
}
.qat > .tri {
  margin-left: -2px;
}
.q-sep {
  width: 1px;
  height: 22px;
  background: #ddd;
}
.q-dim {
  margin-left: -3px;
}
.q-pull2 {
  margin-left: -2px;
}
.q-pull4 {
  margin-left: -4px;
}
.qat > .q-tri-end {
  margin-left: -5px;
}
.q-a {
  width: 14px;
  font-size: 19px;
  font-weight: 700;
  line-height: 1;
  color: #333;
}
.q-more {
  width: 8px;
  height: 5px;
  margin-left: -2px;
  border-top: 2px solid #111;
  clip-path: polygon(0 0, 100% 0, 100% 30%, 50% 100%, 0 30%);
  background: #111;
}

/* options */
.options {
  flex: none;
  height: 31px;
  display: flex;
  align-items: center;
  gap: 4px;
  padding: 0 0 1px 4px;
  box-sizing: border-box;
  background: #e3e9dc;
}
.opt-sep {
  width: 1px;
  height: 23px;
  margin: 0 6px 0 14px;
  background: #c8cec2;
}
.check {
  width: 11px;
  height: 11px;
  border: 1px solid #888;
  background: #fff;
}

/* workspace */
.workspace {
  flex: 1;
  min-height: 0;
  display: flex;
  background: #f1f1f1;
}
.left {
  width: 265px;
  flex: none;
  box-sizing: border-box;
  display: flex;
  flex-direction: column;
  gap: 4px;
  padding-right: 8px;
  border-top: 2px solid #9a9a9a;
  background: #5a5a5a linear-gradient(90deg, #efefef 0, #efefef 257px, #666 257px, #666 258px, #f6f6f6 258px);
}
.props,
.browser {
  display: flex;
  flex-direction: column;
  background: #ececec;
  border-bottom: 2px solid #6a6a6a;
}
.props {
  height: 298px;
  flex: none;
}
.browser {
  flex: 1;
  min-height: 0;
  border-bottom: 0;
  border-top: 1px solid #6a6a6a;
}
.dock-title {
  height: 22px;
  flex: none;
  box-sizing: border-box;
  display: flex;
  align-items: center;
  justify-content: space-between;
  padding: 0 7px 2px 3px;
  background: linear-gradient(#dfe7ec, #b9c5cd);
  color: #3b4650;
}
.dock-x {
  width: 11px;
  height: 11px;
  border: 1px solid #777;
  background: #eef1f3;
  font-size: 10px;
  line-height: 10px;
  text-align: center;
  color: #333;
}
.type-head {
  height: 73px;
  flex: none;
  display: flex;
  align-items: center;
  margin: 1px 5px 0;
  padding-left: 3px;
  background: linear-gradient(#f8f8f8, #ececec);
}
.type-thumb {
  width: 65px;
  height: 65px;
  flex: none;
  display: flex;
  align-items: center;
  justify-content: center;
  box-sizing: border-box;
  border: 1px solid #dcdcdc;
  background: #f6f6f6;
}
.type-name {
  margin-left: 5px;
  flex: 1;
  padding-bottom: 2px;
  color: #444;
}
.type-head .tri {
  margin-right: 3px;
}
.type-row {
  height: 26px;
  flex: none;
  display: flex;
  align-items: center;
  gap: 3px;
  margin-left: 6px;
}
.combo {
  width: 162px;
  height: 24px;
  margin-right: 6px;
  box-sizing: border-box;
  display: flex;
  align-items: center;
  justify-content: space-between;
  padding: 0 4px 2px 3px;
  border: 1px solid #8a8a8a;
  border-radius: 3px;
  background: linear-gradient(#f6f6f6, #d8d8d8);
}
.edit-type {
  padding-bottom: 4px;
}
.prop-body {
  flex: 1;
  min-height: 0;
  display: flex;
  margin-left: 5px;
  overflow: hidden;
}
.prop-table {
  width: 230px;
  flex: none;
  background: #fafafa;
}
.group {
  height: 19px;
  display: flex;
  align-items: center;
  justify-content: space-between;
  padding: 0 7px 0 4px;
  background: #dfdfdf;
}
.prop-row {
  height: 20px;
  box-sizing: border-box;
  display: flex;
  border-bottom: 1px dotted #777;
}
.pname {
  width: 115px;
  flex: none;
  box-sizing: border-box;
  padding-left: 12px;
  line-height: 21px;
  border-right: 1px dotted #777;
}
.pval {
  flex: 1;
  padding-left: 3px;
  line-height: 21px;
  border-right: 1px dotted #777;
}
.pval.focus {
  padding-left: 8px;
  border: 1px solid #111;
  line-height: 18px;
}
.dim .pname,
.dim .pval {
  color: #999;
}
.edit-btn {
  display: block;
  height: 17px;
  margin: 1px 0 0 -2px;
  border: 1px solid #666;
  border-radius: 3px;
  background: linear-gradient(#f6f6f6, #bdbdbd);
  text-align: center;
  line-height: 16px;
}
.vscroll {
  position: relative;
  display: flex;
  flex-direction: column;
  align-items: center;
}
.prop-scroll {
  width: 16px;
  margin-left: 1px;
}
.tree-scroll {
  width: 14px;
  background: #f6f6f6;
}
.arrow-up,
.arrow-down {
  width: 0;
  height: 0;
  border-style: solid;
  border-color: transparent;
}
.arrow-up {
  margin-top: 7px;
  border-width: 0 4px 4px;
  border-bottom-color: #666;
}
.arrow-down {
  border-width: 4px 4px 0;
  border-top-color: #666;
}
.arrow-down.end {
  margin-top: auto;
  margin-bottom: 6px;
}
.thumb {
  width: 12px;
  margin-top: 4px;
  display: flex;
  align-items: center;
  justify-content: center;
  box-sizing: border-box;
  border: 1px solid #aaa;
  border-radius: 2px;
  background: linear-gradient(90deg, #f4f4f4, #d0d0d0);
}
.thumb.short {
  height: 19px;
}
.thumb.long {
  height: 51px;
}
.thumb b {
  width: 6px;
  height: 7px;
  background: repeating-linear-gradient(#777 0 1px, transparent 1px 3px);
}
.prop-foot {
  height: 24px;
  flex: none;
  margin-bottom: 4px;
  display: flex;
  align-items: center;
  justify-content: space-between;
  padding: 0 7px;
}
.help-link {
  color: #1a6eb0;
  text-decoration: underline;
}
.apply {
  width: 72px;
  height: 18px;
  border: 1px solid #bbb;
  border-radius: 3px;
  background: #ececec;
  color: #999;
  line-height: 17px;
  text-align: center;
}
.tree-wrap {
  flex: 1;
  min-height: 0;
  display: flex;
  margin: 0 5px 3px 4px;
  overflow: hidden;
  background: #fff;
}
.tree {
  position: relative;
  flex: 1;
  padding-top: 1px;
}
.vline {
  position: absolute;
  width: 0;
  border-left: 1px dotted #888;
}
.v1 {
  left: 9px;
  top: 12px;
  bottom: 0;
}
.v2 {
  left: 29px;
  top: 20px;
  bottom: 8px;
}
.v3 {
  left: 49px;
  top: 40px;
  bottom: 30px;
}
.node {
  position: relative;
  height: 20px;
  display: flex;
  align-items: center;
}
.lv0 {
  padding-left: 5px;
}
.lv1 {
  padding-left: 25px;
}
.lv2 {
  padding-left: 50px;
}
.box {
  position: relative;
  width: 7px;
  height: 7px;
  flex: none;
  border: 1px solid #888;
  background: #f0f0f0;
  font-size: 9px;
  line-height: 6px;
  text-align: center;
}
.hdots {
  width: 8px;
  border-top: 1px dotted #888;
}
.lv0 .hdots {
  width: 6px;
}
.lv2 .hdots {
  width: 13px;
}
.lv0 .node-text {
  margin-left: 7px;
  padding: 0 2px;
  background: #e2e2e2;
}
.lv1 .node-text {
  margin-left: 5px;
}
.lv2 .node-text {
  margin-left: 4px;
}
.bold {
  font-weight: 700;
}

/* view */
.view-area {
  flex: 1;
  min-width: 0;
  display: flex;
  flex-direction: column;
  border-top: 2px solid #8a8a8a;
}
.canvas {
  position: relative;
  flex: 1;
  min-height: 0;
  background: #fff;
  border-left: 1px solid #b8b8b8;
  margin-left: -1px;
}
.drawing {
  position: absolute;
  left: 0;
  top: 0;
  fill: none;
  stroke-width: 1;
}
.grid-label {
  font-family: "Liberation Serif", serif;
  font-size: 20px;
  text-anchor: middle;
  fill: #111;
}
.view-ctrls {
  position: absolute;
  left: 1031px;
  top: 8px;
  display: flex;
  align-items: center;
  gap: 6px;
}
.vc-min {
  width: 11px;
  height: 3px;
  border: 1px solid #444;
  background: #eee;
}
.nav-bar {
  position: absolute;
  left: 1046px;
  top: 29px;
  width: 36px;
  height: 116px;
  box-sizing: border-box;
  display: flex;
  flex-direction: column;
  align-items: center;
  border: 2px solid #c4c4c4;
  border-radius: 5px;
  background: #f6f6f6;
}
.nav-dot {
  width: 7px;
  height: 7px;
  margin-top: 2px;
  align-self: flex-end;
  margin-right: 2px;
  border-radius: 50%;
  background: #cfcfcf;
  border: 1px solid #bbb;
}
.nav-dot.bottom {
  margin-top: auto;
  margin-bottom: 2px;
}
.nav-wheel {
  margin-top: 8px;
}
.nav-2d {
  margin-top: -12px;
  margin-left: 14px;
  font-size: 10px;
  font-weight: 700;
  color: #aaa;
}
.nav-bar .tri {
  margin-top: 5px;
}
.nav-sep {
  width: 27px;
  height: 1px;
  margin-top: 6px;
  background: #cfcfcf;
}
.nav-zoom {
  margin-top: 8px;
}
.nav-bar .nav-tri {
  margin-top: 14px;
}
.watermark {
  position: absolute;
  left: 833px;
  top: 410px;
  display: flex;
}
.wm-text {
  margin-left: -4px;
  margin-top: 8px;
}
.wm-name {
  font-size: 37.5px;
  font-weight: 900;
  line-height: 34px;
  color: #2e2e2e;
}
.wm-url {
  margin-top: 0;
  font-size: 18.9px;
  line-height: 22px;
  color: #2e2e2e;
  white-space: nowrap;
}
.canvas-scroll {
  position: absolute;
  right: 0;
  top: 0;
  bottom: 0;
  width: 12px;
  background: #f3f3f3;
}
.canvas-scroll .arrow-up {
  margin-top: 5px;
  border-bottom-color: #222;
}
.cs-thumb {
  width: 11px;
  height: 15px;
  margin-top: 228px;
  box-sizing: border-box;
  border: 1px solid #bbb;
  background: #f8f8f8;
}
.view-bar {
  position: relative;
  flex: none;
  height: 21px;
  display: flex;
  align-items: center;
  justify-content: space-between;
  padding: 0 16px 0 21px;
  background: #efefef;
  border-bottom: 1px solid #666;
}
.scale {
  width: 57px;
  flex: none;
  white-space: pre;
  font-size: 11px;
  word-spacing: 5px;
}
.vb-icons {
  flex: 1;
  display: flex;
  align-items: center;
}
.vb-icons > :nth-child(2) {
  margin-left: 7px;
}
.vb-icons > :nth-child(3) {
  margin-left: -1px;
}
.vb-icons > :nth-child(4) {
  margin-left: 5px;
}
.vb-icons > :nth-child(5) {
  margin-left: 3px;
}
.vb-icons > :nth-child(6) {
  margin-left: 2px;
}
.vb-icons > :nth-child(7) {
  margin-left: 3px;
}
.vb-icons > :nth-child(8) {
  margin-left: 6px;
}
.vb-icons > :nth-child(9) {
  margin-left: 8px;
}
.vb-icons > :nth-child(10) {
  margin-left: 9px;
}
.h-thumb {
  position: absolute;
  left: 667px;
  top: 0;
  width: 13px;
  height: 15px;
  border: 1px solid #bbb;
  background: linear-gradient(90deg, #f6f6f6, #d8d8d8);
}
.view-bar .tri-right {
  border-width: 4px 0 4px 4px;
}

/* status */
.status {
  flex: none;
  height: 22px;
  display: flex;
  align-items: center;
  box-sizing: border-box;
  background: linear-gradient(#ededed, #c8c8c8);
  border-bottom: 1px solid #222;
}
.status-text {
  width: 527px;
  flex: none;
  padding: 0 0 3px 2px;
  box-sizing: border-box;
}
.st-input {
  align-self: stretch;
  margin-top: 1px;
  display: flex;
  align-items: center;
  justify-content: space-between;
  padding: 0 5px;
  box-sizing: border-box;
  background: #fff;
  color: #777;
}
.st-input.wide {
  width: 204px;
  margin-left: 7px;
  justify-content: flex-end;
}
.st-input.model {
  width: 155px;
  margin-left: 10px;
  padding-left: 3px;
}
.st-ic2 {
  margin-left: 9px;
}
.st-count {
  width: 38px;
  margin-left: 2px;
}
.st-ic4 {
  margin-left: 11px;
}
</style>
